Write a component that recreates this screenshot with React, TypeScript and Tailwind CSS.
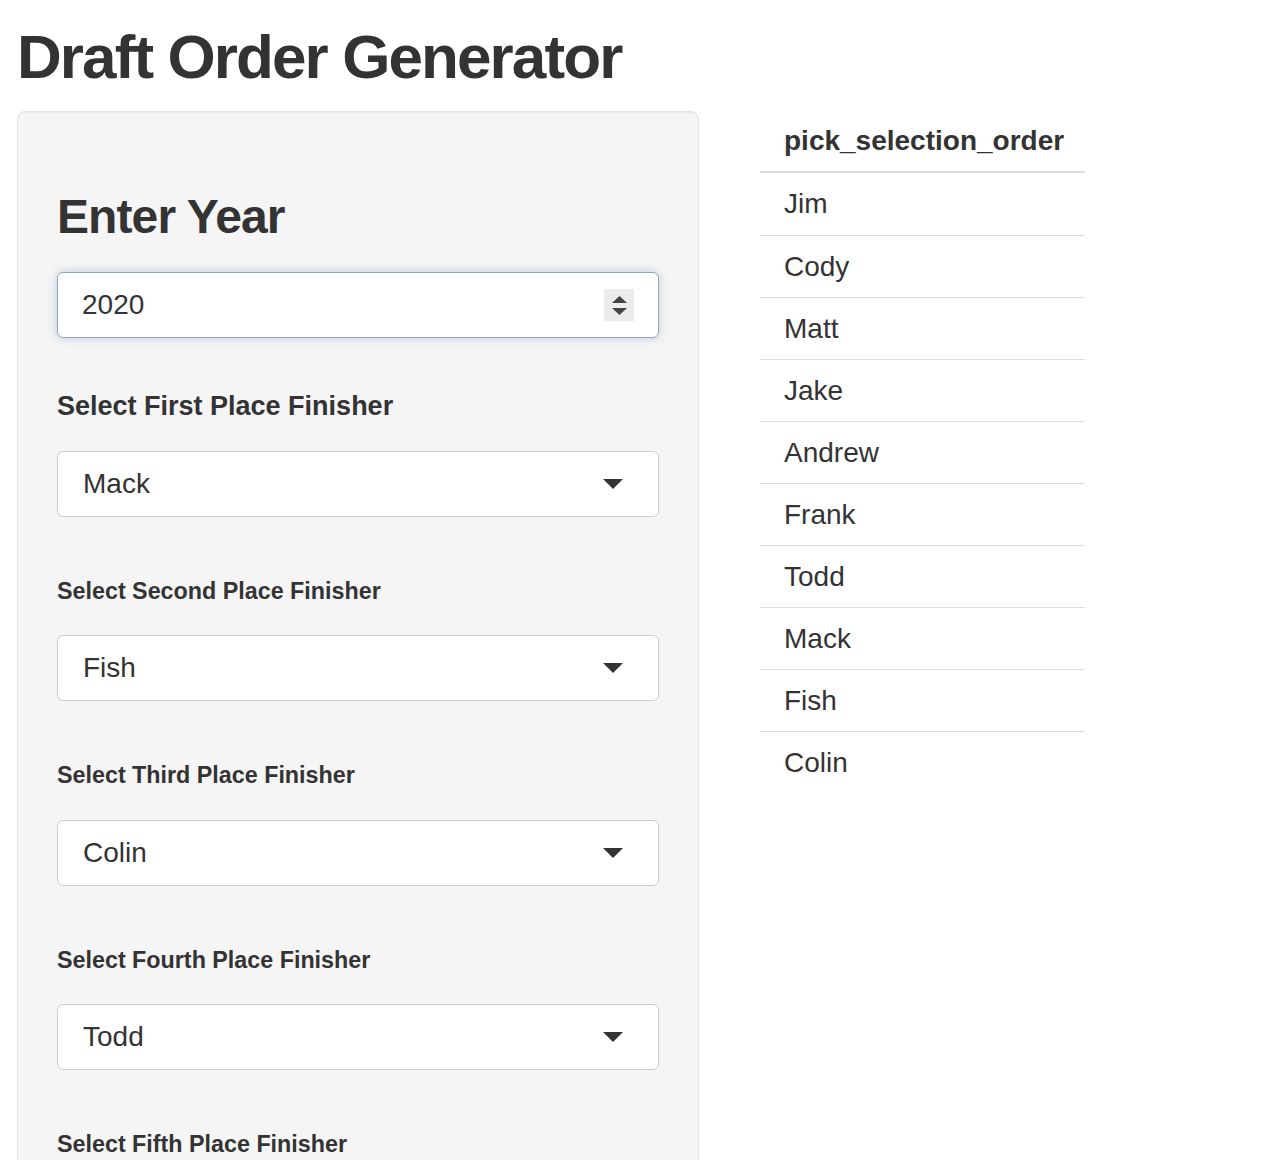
import React from "react";

const Caret = () => (
  <svg width="20" height="10" viewBox="0 0 20 10" className="shrink-0">
    <path d="M0 0 L20 0 L10 10 Z" fill="#333" />
  </svg>
);

function SelectBox({ value }: { value: string }) {
  return (
    <div className="h-[66px] w-full rounded-[6px] border border-[#cccccc] bg-white flex items-center justify-between pl-[25px] pr-[35px]">
      <span className="text-[28px] leading-none text-[#333]">{value}</span>
      <Caret />
    </div>
  );
}

function Group({ label, value, first }: { label: string; value?: string; first?: boolean }) {
  return (
    <div>
      <div
        className={
          first
            ? "mt-[55px] text-[27px] font-bold leading-none text-[#333]"
            : "mt-[63px] text-[23.3px] font-bold leading-none text-[#333]"
        }
      >
        {label}
      </div>
      {value ? (
        <div className={first ? "mt-[31px]" : "mt-[32px]"}>
          <SelectBox value={value} />
        </div>
      ) : (
        <div className="h-[120px]" />
      )}
    </div>
  );
}

const rows = ["Jim", "Cody", "Matt", "Jake", "Andrew", "Frank", "Todd", "Mack", "Fish", "Colin"];

export default function App() {
  return (
    <div
      className="h-[1160px] overflow-hidden bg-white text-[#333]"
      style={{ fontFamily: '"Liberation Sans", Arial, Helvetica, sans-serif' }}
    >
      <h1 className="pt-[26px] pl-[17px] text-[62px] font-bold leading-none tracking-[-1.9px] text-[#333]">
        Draft Order Generator
      </h1>
      <div className="mt-[23px] flex items-start pl-[17px]">
        <div className="w-[682px] shrink-0 rounded-[8px] border border-[#e3e3e3] bg-[#f5f5f5] px-[39px] pt-[81px] pb-[40px] shadow-[inset_0_1px_1px_rgba(0,0,0,0.05)]">
          <h3 className="text-[48px] font-bold leading-none tracking-[-0.9px] text-[#333]">
            Enter Year
          </h3>
          <div className="mt-[31px] h-[66px] w-full rounded-[6px] border border-[#8ea7bf] bg-white flex items-center justify-between pl-[24px] pr-[24px] shadow-[0_0_10px_rgba(102,140,180,0.4)]">
            <span className="text-[28px] leading-none text-[#333]">2020</span>
            <div className="flex h-[32px] w-[30px] flex-col items-center justify-center gap-[5px] bg-[#ececec]">
              <svg width="15" height="7" viewBox="0 0 15 7">
                <path d="M0 7 L7.5 0 L15 7 Z" fill="#444" />
              </svg>
              <svg width="15" height="7" viewBox="0 0 15 7">
                <path d="M0 0 L15 0 L7.5 7 Z" fill="#444" />
              </svg>
            </div>
          </div>
          <Group first label="Select First Place Finisher" value="Mack" />
          <Group label="Select Second Place Finisher" value="Fish" />
          <Group label="Select Third Place Finisher" value="Colin" />
          <Group label="Select Fourth Place Finisher" value="Todd" />
          <Group label="Select Fifth Place Finisher" />
        </div>
        <div className="ml-[61px] w-[325px]">
          <div className="border-b-2 border-[#dddddd] pl-[24px] pt-[16px] pb-[16px] text-[28px] font-bold leading-none text-[#333]">
            pick_selection_order
          </div>
          {rows.map((r, i) => (
            <div
              key={r}
              className={
                i === 0
                  ? "flex h-[62px] items-center pl-[24px] text-[28px] leading-none"
                  : "flex h-[62px] items-center border-t border-[#dddddd] pl-[24px] text-[28px] leading-none"
              }
            >
              {r}
            </div>
          ))}
        </div>
      </div>
    </div>
  );
}
